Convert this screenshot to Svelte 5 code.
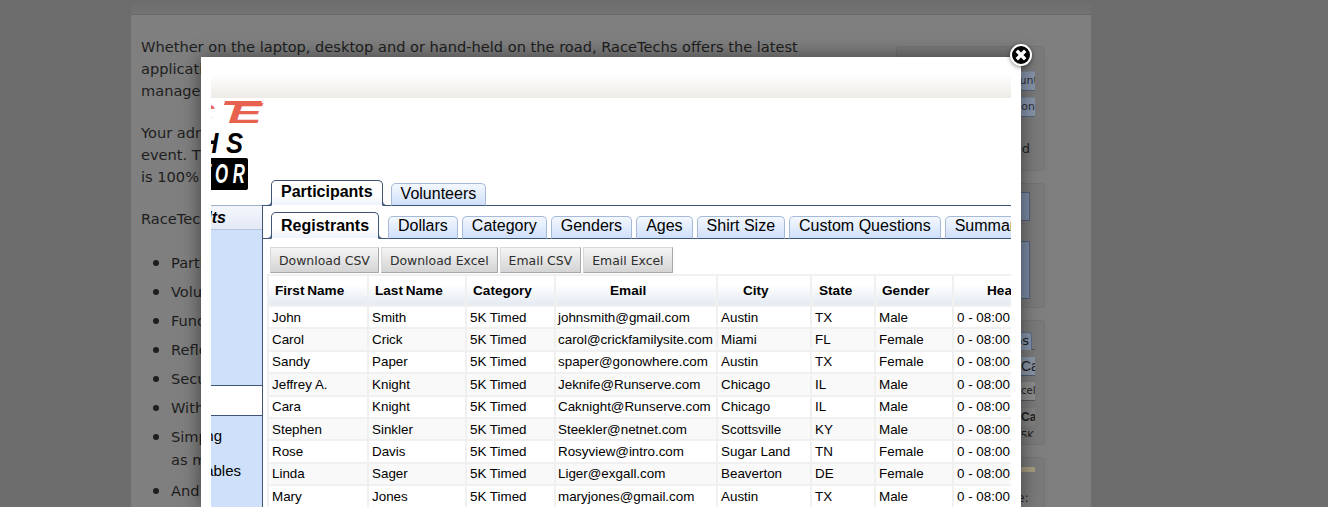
<script>
  const columns = ['First Name', 'Last Name', 'Category', 'Email', 'City', 'State', 'Gender', 'Heat'];
  const people = [
    ['John', 'Smith', '5K Timed', 'johnsmith@gmail.com', 'Austin', 'TX', 'Male'],
    ['Carol', 'Crick', '5K Timed', 'carol@crickfamilysite.com', 'Miami', 'FL', 'Female'],
    ['Sandy', 'Paper', '5K Timed', 'spaper@gonowhere.com', 'Austin', 'TX', 'Female'],
    ['Jeffrey A.', 'Knight', '5K Timed', 'Jeknife@Runserve.com', 'Chicago', 'IL', 'Male'],
    ['Cara', 'Knight', '5K Timed', 'Caknight@Runserve.com', 'Chicago', 'IL', 'Male'],
    ['Stephen', 'Sinkler', '5K Timed', 'Steekler@netnet.com', 'Scottsville', 'KY', 'Male'],
    ['Rose', 'Davis', '5K Timed', 'Rosyview@intro.com', 'Sugar Land', 'TN', 'Female'],
    ['Linda', 'Sager', '5K Timed', 'Liger@exgall.com', 'Beaverton', 'DE', 'Female'],
    ['Mary', 'Jones', '5K Timed', 'maryjones@gmail.com', 'Austin', 'TX', 'Male']
  ];
  const subTabs = ['Dollars', 'Category', 'Genders', 'Ages', 'Shirt Size', 'Custom Questions', 'Summary'];
  const actions = ['Download CSV', 'Download Excel', 'Email CSV', 'Email Excel'];
  const bullets = ['Participants', 'Volunteers', 'Fundraising', 'Reflections', 'Security', 'Within', 'Simple'];
</script>

<div class="page">
  <div class="page-top"></div>
  <div class="page-body">
    <div class="copy">
      <p>Whether on the laptop, desktop and or hand-held on the road, RaceTechs offers the latest<br>applications<br>manage</p>
      <p>Your admin<br>event. The<br>is 100% free</p>
      <p>RaceTechs</p>
      <ul>
        {#each bullets as b}<li>{b}</li>{/each}
        <li class="cont">as many</li>
        <li>And more</li>
      </ul>
    </div>
    <div class="cards">
      <div class="card c1">
        <div class="mini-btn first">Volunteers</div>
        <div class="mini-btn">Registration</div>
        <div class="card-text">Updated</div>
      </div>
      <div class="card c2"><div class="slate s1"></div><div class="slate s2"></div></div>
      <div class="card c3">
        <div class="mini-line"></div>
        <div class="mini-tab">Tabs</div>
        <div class="mini-row r1">Category</div>
        <div class="mini-row r2">Excel</div>
        <div class="mini-row r3">Category</div>
        <div class="mini-row r4">5K Timed</div>
      </div>
      <div class="card c4"><div class="tan"></div><div class="card-text">Date:</div></div>
    </div>
  </div>
</div>

<div class="modal">
  <button class="close" aria-label="Close">
    <svg viewBox="0 0 24 24" width="24" height="24">
      <circle cx="12" cy="12" r="10" fill="#000" stroke="#fff" stroke-width="2" />
      <path d="M7.8 7.8l8.4 8.4M16.2 7.8l-8.4 8.4" stroke="#fff" stroke-width="3.4" fill="none" />
    </svg>
  </button>
  <div class="frame">
    <div class="strip"></div>
    <svg class="logo" width="60" height="92" viewBox="0 0 60 92">
      <polygon points="14,3 51,3 50,7 13,7" fill="#e8634f" />
      <text transform="translate(64.6 25) scale(1.7 1)" text-anchor="end" class="logo-text" font-size="30" letter-spacing="8" fill="#e8634f">RACE</text>
      <text transform="translate(39.6 55) scale(.85 1)" text-anchor="end" class="logo-text" font-size="30" letter-spacing="9" fill="#000">TECHS</text>
      <rect x="-5" y="60" width="42" height="32" rx="2" fill="#000" />
      <text transform="translate(38.8 85) scale(.6 1)" text-anchor="end" class="logo-text" font-size="28" letter-spacing="8" fill="#fff">EDITOR</text>
    </svg>
    <div class="main">
      <aside class="side">
        <div class="side-head"><span>Results</span></div>
        <div class="side-panel"></div>
        <div class="side-panel second">
          <div class="side-item one">Timing</div>
          <div class="side-item two">Variables</div>
        </div>
      </aside>
      <section class="content">
        <div class="tabs top">
          <div class="tab active">Participants</div>
          <div class="tab">Volunteers</div>
        </div>
        <div class="panel">
          <div class="tabs sub">
            <div class="tab active">Registrants</div>
            {#each subTabs as t}<div class="tab">{t}</div>{/each}
          </div>
          <div class="actions">
            {#each actions as a}<button>{a}</button>{/each}
          </div>
          <table>
            <thead>
              <tr>{#each columns as c}<th>{c}</th>{/each}</tr>
            </thead>
            <tbody>
              {#each people as p}
                <tr>{#each p as v}<td>{v}</td>{/each}<td>0 - 08:00</td></tr>
              {/each}
            </tbody>
          </table>
        </div>
      </section>
    </div>
  </div>
</div>

<style>
  :global(body) {
    margin: 0;
    background: #6d6d6d;
    height: 507px;
    overflow: hidden;
  }

  .page {
    position: relative;
    width: 960px;
    height: 507px;
    margin-left: 131px;
    background: #7f7f7f;
    font-family: "DejaVu Sans", sans-serif;
    color: #1e1e1e;
    overflow: hidden;
  }

  .page-top {
    height: 14px;
    background: linear-gradient(#6c6c6c, #737373);
    border-bottom: 1px solid #686868;
  }

  .page-body {
    display: flex;
    justify-content: space-between;
    padding: 21px 46px 0 10px;
  }

  .copy {
    width: 700px;
    font-size: 14.6px;
    line-height: 22px;
    white-space: nowrap;
  }

  .copy p {
    margin: 0 0 20px;
  }

  .copy ul {
    margin: -3px 0 0;
    padding-left: 30px;
  }

  .copy li {
    height: 29px;
    line-height: 29px;
  }

  .copy li::marker {
    font-size: 18px;
  }

  .copy .cont {
    list-style: none;
    height: 25px;
    line-height: 19px;
  }

  .cards {
    width: 149px;
    margin-top: 10px;
    display: flex;
    flex-direction: column;
    gap: 12px;
  }

  .card {
    position: relative;
    background: #7a7a7a;
    border: 1px solid #747474;
    border-radius: 4px;
    box-sizing: border-box;
    font-size: 13px;
    height: 125px;
    overflow: hidden;
  }

  .mini-btn {
    margin: 6px 9px 0 0;
    height: 18px;
    line-height: 18px;
    font-size: 11px;
    background: #8694aa;
    border-top: 1px solid #77849a;
    border-bottom: 1px solid #59647a;
    text-align: right;
    color: #2a2f3a;
    overflow: hidden;
    white-space: nowrap;
  }

  .mini-btn.first {
    margin-top: 24px;
    text-align: left;
    padding-left: 106px;
  }

  .card-text {
    position: absolute;
    right: 14px;
    top: 94px;
    color: #222;
  }

  .slate {
    position: absolute;
    right: 14px;
    width: 130px;
    background: #7c8aa3;
    border: 1px solid #566077;
    box-sizing: border-box;
  }

  .s1 { top: 8px; height: 29px; }
  .s2 { top: 57px; height: 58px; }

  .mini-line {
    position: absolute;
    top: 28px;
    right: 9px;
    width: 100px;
    height: 1px;
    background: #49546a;
  }

  .mini-tab {
    position: absolute;
    top: 11px;
    right: 12px;
    width: 80px;
    height: 18px;
    text-align: right;
    background: #8694aa;
    border: 1px solid #5f6c85;
    border-bottom: 0;
    border-radius: 4px 4px 0 0;
    padding-right: 2px;
    box-sizing: border-box;
  }

  .mini-row {
    position: absolute;
    right: 9px;
    width: 14px;
    box-sizing: border-box;
    overflow: hidden;
    white-space: nowrap;
  }

  .r1 { top: 36px; height: 19px; line-height: 18px; background: #8a94a5; border-bottom: 1px solid #525c70; font-size: 14px; font-family: "Liberation Sans", sans-serif; }
  .r2 { top: 61px; height: 19px; line-height: 18px; background: #8d8d8d; border-bottom: 1px solid #5a5a5a; font-size: 10px; text-indent: -12px; }
  .r3 { top: 87px; height: 18px; line-height: 18px; background: #818181; font-weight: bold; font-size: 12px; font-family: "Liberation Sans", sans-serif; }
  .r4 { top: 107px; height: 9px; line-height: 15px; font-size: 10px; }

  .tan {
    position: absolute;
    top: 9px;
    right: 9px;
    width: 100px;
    height: 5px;
    background: #a59c7f;
  }

  .c4 .card-text { top: 32px; right: 15px; }

  .modal {
    position: absolute;
    left: 201px;
    top: 57px;
    width: 820px;
    height: 450px;
    background: #fff;
    box-shadow: 0 0 18px rgba(0, 0, 0, 0.5);
    font-family: "Liberation Sans", Arial, sans-serif;
    color: #000;
  }

  .close {
    position: absolute;
    top: -14px;
    right: -12px;
    width: 24px;
    height: 24px;
    padding: 0;
    border: 0;
    background: none;
    filter: drop-shadow(0 1px 2px rgba(0, 0, 0, 0.5));
    z-index: 2;
  }

  .close svg {
    display: block;
  }

  .frame {
    position: absolute;
    inset: 15px 10px 0;
    overflow: hidden;
  }

  .strip {
    height: 26px;
    background: linear-gradient(#fff 10%, #eeebe6);
  }

  .logo {
    display: block;
  }

  .logo-text {
    font-family: "Liberation Sans", sans-serif;
    font-weight: bold;
    font-style: italic;
  }

  .main {
    display: flex;
    margin-top: -10px;
    height: 340px;
  }

  .side {
    flex: none;
    width: 52px;
    padding-top: 25px;
    overflow: hidden;
  }

  .side-head {
    display: flex;
    justify-content: flex-end;
    height: 25px;
    padding-right: 37px;
    border-top: 1px solid #9fb0cc;
    border-bottom: 1px solid #b9c4d8;
    background: linear-gradient(#f4f6fb, #e3e9f6);
    font-size: 16px;
    font-weight: bold;
    font-style: italic;
    line-height: 24px;
    white-space: nowrap;
    box-sizing: border-box;
  }

  .side-head span {
    flex: none;
  }

  .side-panel {
    height: 156px;
    background: #cfe0fa;
    border-right: 1px solid #3f5578;
    border-bottom: 1px solid #3f5578;
    box-sizing: border-box;
  }

  .side-panel.second {
    height: 130px;
    margin-top: 29px;
    border-bottom: 0;
    border-top: 1px solid #3f5578;
    font-size: 15px;
    position: relative;
  }

  .side-item {
    position: absolute;
    white-space: nowrap;
  }

  .side-item.one { top: 11px; right: 40px; }
  .side-item.two { top: 46px; right: 21px; }

  .content {
    flex: 1;
    min-width: 0;
    margin-left: -1px;
    overflow: hidden;
  }

  .panel {
    border-left: 1px solid #3f5578;
    height: 320px;
    margin-top: -1px;
    padding-top: 1px;
  }

  .tabs {
    display: flex;
    gap: 4px;
    box-sizing: border-box;
    padding-left: 8px;
    border-bottom: 1px solid #3f5578;
    align-items: flex-end;
    white-space: nowrap;
  }

  .tabs.top {
    height: 26px;
    padding-left: 9px;
  }

  .tabs.sub {
    height: 33px;
    padding-left: 8px;
  }

  .tab {
    flex: none;
    box-sizing: border-box;
    height: 23px;
    padding: 0 9px;
    margin-bottom: -1px;
    font-size: 16px;
    line-height: 20px;
    border: 1px solid #a6bad8;
    border-bottom-color: #3f5578;
    border-radius: 5px 5px 0 0;
    background: linear-gradient(#f4f8fe, #cfe0fa);
  }

  .sub .tab {
    line-height: 18px;
  }

  .tab.active {
    position: relative;
    height: 26px;
    line-height: 22px;
    margin-right: 4px;
    font-weight: bold;
    border-color: #3f5578;
    border-bottom-color: #fff;
    background: linear-gradient(#fff 60%, #edf2fb);
  }

  .tab.active::before,
  .tab.active::after {
    content: "";
    position: absolute;
    bottom: -1px;
    width: 5px;
    height: 5px;
    border-bottom: 1px solid #3f5578;
  }

  .tab.active::before {
    left: -6px;
    border-right: 1px solid #3f5578;
    border-bottom-right-radius: 5px;
  }

  .tab.active::after {
    right: -6px;
    border-left: 1px solid #3f5578;
    border-bottom-left-radius: 5px;
  }

  .sub .tab.active {
    height: 27px;
    line-height: 25px;
    margin-right: 5px;
  }

  .actions {
    display: flex;
    gap: 2px;
    margin: 8px 0 1px 7px;
  }

  .actions button {
    height: 26px;
    padding: 0 8px;
    font: 12.45px "DejaVu Sans", sans-serif;
    color: #2e2e2e;
    background: linear-gradient(#f4f4f4, #d4d4d4);
    border: 1px solid #a8a8a8;
    border-top-color: #d8d8d8;
    border-left-color: #d8d8d8;
  }

  table {
    margin-left: 4px;
    border-collapse: separate;
    border-spacing: 2px;
    background: #f0f0f0;
    font-size: 13.4px;
    table-layout: fixed;
    width: 810px;
  }

  th {
    box-sizing: border-box;
    height: 29px;
    padding: 0 0 1px 6px;
    font-size: 13.6px;
    text-align: left;
    word-spacing: -1px;
    background: linear-gradient(#fff 30%, #e4eaf2);
    white-space: nowrap;
  }

  th:nth-child(1) { width: 98px; }
  th:nth-child(2) { width: 96px; }
  th:nth-child(3) { width: 87px; }
  th:nth-child(4) { width: 160px; padding-left: 54px; }
  th:nth-child(5) { width: 92px; padding-left: 25px; }
  th:nth-child(6) { width: 62px; padding-left: 7px; }
  th:nth-child(7) { width: 76px; }
  th:nth-child(8) { padding-left: 33px; }

  td {
    box-sizing: border-box;
    height: 20.4px;
    padding: 0 0 0 3px;
    background: #fff;
    white-space: nowrap;
    overflow: hidden;
  }

  td:nth-child(4) {
    padding-left: 2px;
  }

  tbody tr:nth-child(even) td {
    background: #f9f9f9;
  }
</style>
